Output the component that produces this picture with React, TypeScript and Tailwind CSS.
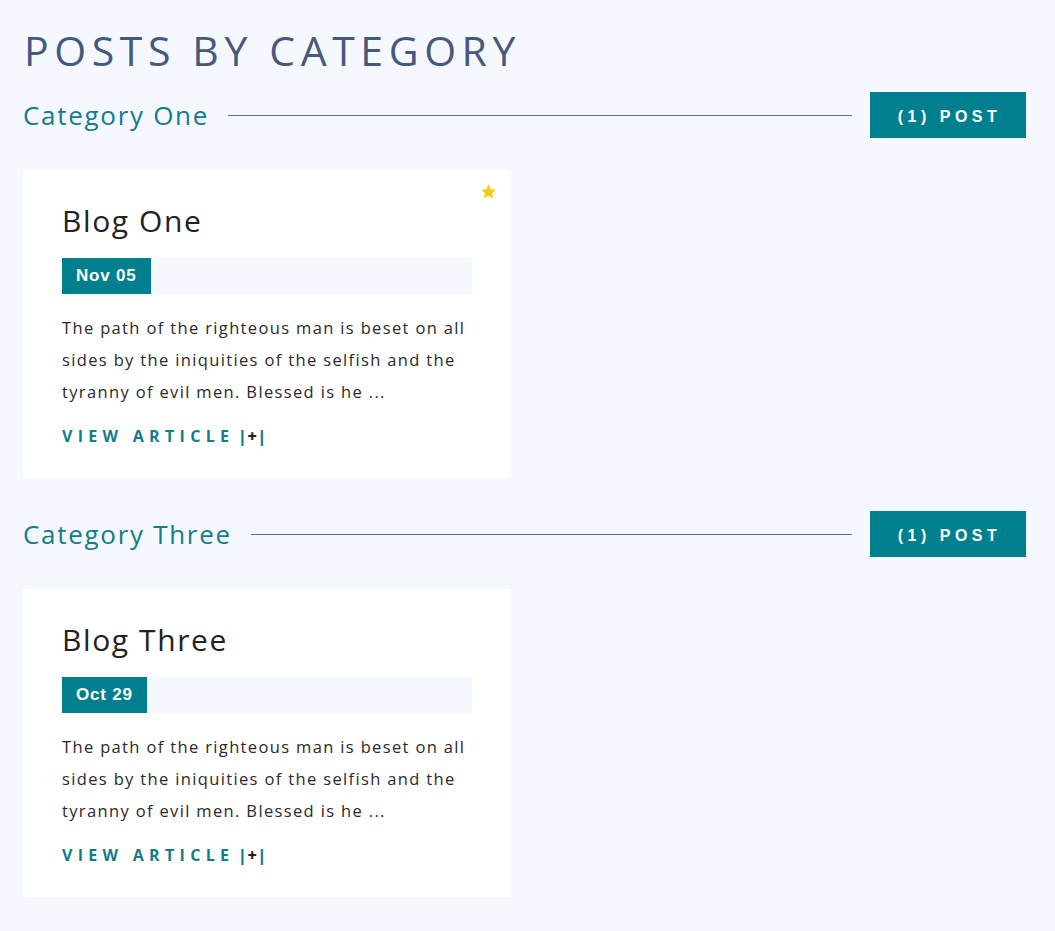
import React from "react";

const font = { fontFamily: '"Open Sans", "Noto Sans", sans-serif' };

function Section({ name, title, date, star }: { name: string; title: string; date: string; star?: boolean }) {
  return (
    <div>
      <div className="flex items-center h-[46px]">
        <h2 className="text-[26px] text-[#137c8b] tracking-[1.7px] leading-none pr-[19px] whitespace-nowrap">{name}</h2>
        <div className="flex-1 h-px bg-[#5d6d84]"></div>
        <div
          className="ml-[18px] w-[156px] h-[46px] bg-[#007f8f] text-white flex items-center justify-center text-[16px] font-bold tracking-[4.5px] pt-[3px] pl-[3px]"
          style={{ fontFamily: '"Liberation Sans", Arial, sans-serif' }}
        >
          (1) POST
        </div>
      </div>
      <div className="mt-[32px] w-[488px] bg-white relative pl-[39px] pr-[39px] pt-[30px] pb-[31px]">
        {star && (
          <svg className="absolute right-[14px] top-[13px]" width="17" height="17" viewBox="0 0 24 24">
            <path fill="#f7ca18" d="M12 1.8l3.1 6.9 7.4.7-5.6 5 1.7 7.4L12 17.9l-6.6 3.9 1.7-7.4-5.6-5 7.4-.7z" />
          </svg>
        )}
        <h3 className="text-[30px] text-[#222] leading-[42px] tracking-[1.6px]">{title}</h3>
        <div className="mt-[16px] h-[36px] bg-[#f5f8fe] flex">
          <div
            className="h-full bg-[#007f8f] text-white font-bold text-[17px] flex items-center px-[14px] tracking-[0.8px]"
            style={{ fontFamily: '"Liberation Sans", Arial, sans-serif' }}
          >
            {date}
          </div>
        </div>
        <p className="mt-[18px] text-[16.5px] leading-[32px] text-[#2a2a2a] tracking-[1.35px]">
          The path of the righteous man is beset on all sides by the iniquities of the selfish and the tyranny of evil men. Blessed is he ...
        </p>
        <div className="mt-[17px] text-[16px] font-bold tracking-[5.3px] text-[#137c8b] leading-[22px]">
          VIEW ARTICLE<span className="tracking-normal ml-[4px] font-extrabold">|<span className="text-[#222] mx-[1px]">+</span>|</span>
        </div>
      </div>
    </div>
  );
}

export default function App() {
  return (
    <div className="min-h-[931px] bg-[#f5f8fe] px-[23px] pt-[26px]" style={font}>
      <h1 className="text-[41px] leading-[48px] tracking-[5.6px] text-[#46597d] pl-px">POSTS BY CATEGORY</h1>
      <div className="mt-[18px] flex flex-col gap-[33px] pr-[6px]">
        <Section name="Category One" title="Blog One" date="Nov 05" star />
        <Section name="Category Three" title="Blog Three" date="Oct 29" />
      </div>
    </div>
  );
}
